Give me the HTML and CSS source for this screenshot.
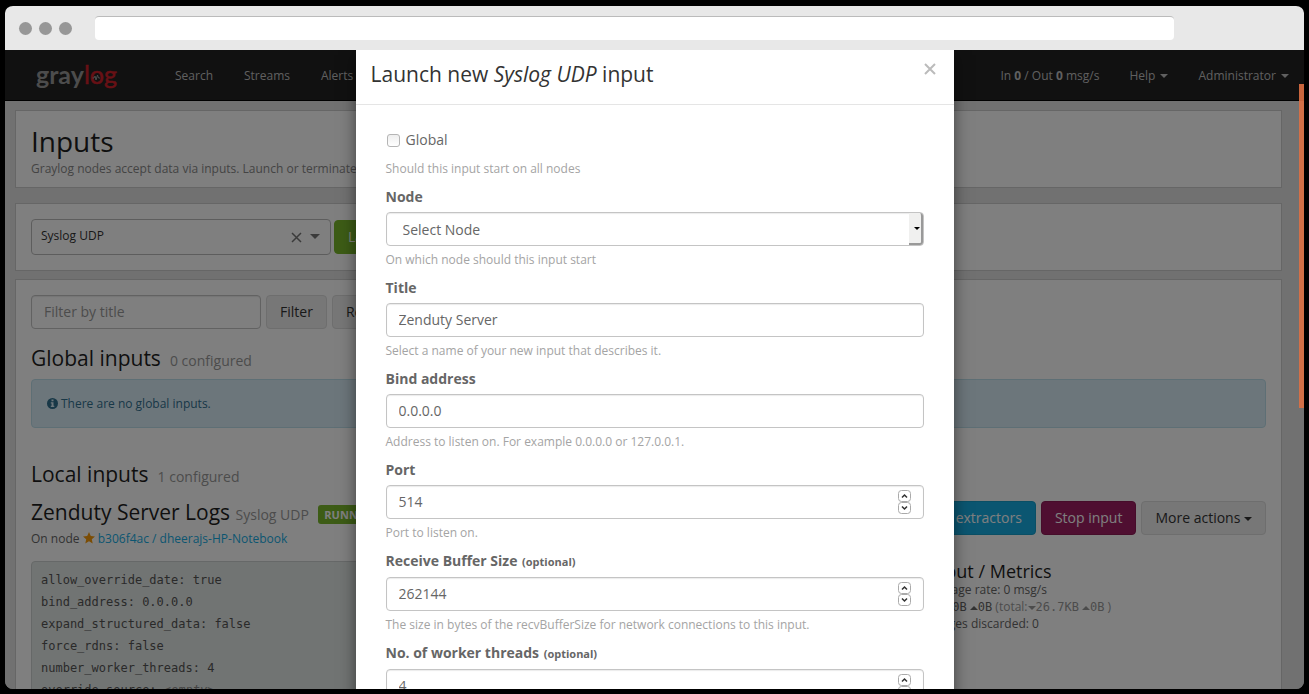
FILE: index.html
```html
<!DOCTYPE html>
<html lang="en">
<head>
<meta charset="utf-8">
<title>Graylog - Inputs</title>
<link rel="stylesheet" href="styles.css">
</head>
<body>
<div class="window">
  <div class="titlebar">
    <span class="dot"></span><span class="dot"></span><span class="dot"></span>
    <input class="address" type="text" aria-label="Address">
  </div>
  <div class="viewport">
    <header class="navbar">
      <a class="brand" href="#" aria-label="graylog">
        <svg width="84" height="32" viewBox="0 0 84 32">
          <text class="logo-text" x="1" y="25"><tspan class="logo-gray">gray</tspan><tspan class="logo-log">log</tspan></text>
          <path class="logo-pulse" d="M57.500 19h1.500l1-2 1 4 1.500-5 1 3h1.500"/>
        </svg>
      </a>
      <nav class="nav">
        <a href="#">Search</a>
        <a href="#">Streams</a>
        <a href="#">Alerts</a>
      </nav>
      <nav class="nav nav-right">
        <span>In <b>0</b> / Out <b>0</b> msg/s</span>
        <a href="#">Help <i class="caret"></i></a>
        <a href="#">Administrator <i class="caret"></i></a>
      </nav>
    </header>
    <main class="page">
      <section class="panel intro">
        <h1>Inputs</h1>
        <p class="muted">Graylog nodes accept data via inputs. Launch or terminate</p>
      </section>
      <section class="panel launcher">
        <div class="combo">
          <span>Syslog UDP</span>
          <svg width="32" height="14" viewBox="0 0 32 14"><path class="combo-x" d="M2 3l9 9M11 3l-9 9"/><path class="combo-arrow" d="M20 4h10l-5 5z"/></svg>
        </div>
        <button class="btn btn-green" type="button">Launch new input</button>
      </section>
      <section class="panel inputs">
        <form class="filter">
          <input class="control" type="text" placeholder="Filter by title" aria-label="Filter by title">
          <button class="btn" type="button">Filter</button>
          <button class="btn" type="button">Reset</button>
        </form>
        <h2>Global inputs <small>&nbsp;0 configured</small></h2>
        <div class="alert">
          <svg width="11" height="11" viewBox="0 0 11 11"><circle class="info-disc" cx="5.500" cy="5.500" r="5.500"/><path class="info-mark" d="M4.500 1.500h2v1.700h-2zM3.800 4.200h2.700v3.600h.8v1.200H3.800V7.800h.8V5.400h-.8z"/></svg>
          There are no global inputs.
        </div>
        <h2 class="local">Local inputs <small>&nbsp;1 configured</small></h2>
        <div class="input-head">
          <div>
            <h2>Zenduty Server Logs <small>Syslog UDP</small> <span class="badge">RUNNING</span></h2>
            <p class="node">On node <svg width="12" height="12" viewBox="0 0 12 12"><path class="star" d="M6 0l1.800 4 4.200.4-3.200 2.900.9 4.300L6 9.300l-3.700 2.300.9-4.300L0 4.400 4.200 4z"/></svg> <a href="#">b306f4ac / dheerajs-HP-Notebook</a></p>
          </div>
          <div class="actions">
            <button class="btn btn-blue" type="button">Manage extractors</button>
            <button class="btn btn-plum" type="button">Stop input</button>
            <button class="btn" type="button">More actions <i class="caret"></i></button>
          </div>
        </div>
        <div class="details">
          <ul class="config">
            <li>allow_override_date: true</li>
            <li>bind_address: 0.0.0.0</li>
            <li>expand_structured_data: false</li>
            <li>force_rdns: false</li>
            <li>number_worker_threads: 4</li>
            <li>override_source: <em>&lt;empty&gt;</em></li>
          </ul>
          <div class="metrics">
            <h3>Throughput / Metrics</h3>
            <p>1 minute average rate: 0 msg/s</p>
            <p>Network IO: <i class="caret"></i><code>0B</code> <i class="caret up"></i><code>0B</code> <span class="faint">(total:<i class="caret"></i><code>26.7KB</code> <i class="caret up"></i><code>0B</code> )</span></p>
            <p>Empty messages discarded: 0</p>
          </div>
        </div>
      </section>
    </main>
    <div class="backdrop">
      <div class="modal" role="dialog" aria-labelledby="modal-title">
        <div class="modal-head">
          <h2 id="modal-title">Launch new <em>Syslog UDP</em> input</h2>
          <button class="close" type="button" aria-label="Close"><svg width="12" height="12" viewBox="0 0 12 12"><path d="M1 1l10 10M11 1L1 11"/></svg></button>
        </div>
        <form class="modal-body">
          <div class="field">
            <label class="check"><input type="checkbox">Global</label>
            <p class="help">Should this input start on all nodes</p>
          </div>
          <div class="field">
            <label for="node">Node</label>
            <div class="select-wrap"><select class="control" id="node"><option>Select Node</option></select></div>
            <p class="help">On which node should this input start</p>
          </div>
          <div class="field">
            <label for="title">Title</label>
            <input class="control" id="title" type="text" value="Zenduty Server">
            <p class="help">Select a name of your new input that describes it.</p>
          </div>
          <div class="field">
            <label for="bind">Bind address</label>
            <input class="control" id="bind" type="text" value="0.0.0.0">
            <p class="help">Address to listen on. For example 0.0.0.0 or 127.0.0.1.</p>
          </div>
          <div class="field">
            <label for="port">Port</label>
            <div class="number-wrap">
              <input class="control" id="port" type="number" value="514">
              <svg class="spin" width="13" height="26" viewBox="0 0 13 26"><rect x=".5" y=".5" width="12" height="11" rx="3"/><rect x=".5" y="12.500" width="12" height="11" rx="3"/><path d="M4 7.500L6.500 5 9 7.500M4 16.500L6.500 19 9 16.500"/></svg>
            </div>
            <p class="help">Port to listen on.</p>
          </div>
          <div class="field">
            <label for="buffer">Receive Buffer Size <small>(optional)</small></label>
            <div class="number-wrap">
              <input class="control" id="buffer" type="number" value="262144">
              <svg class="spin" width="13" height="26" viewBox="0 0 13 26"><rect x=".5" y=".5" width="12" height="11" rx="3"/><rect x=".5" y="12.500" width="12" height="11" rx="3"/><path d="M4 7.500L6.500 5 9 7.500M4 16.500L6.500 19 9 16.500"/></svg>
            </div>
            <p class="help">The size in bytes of the recvBufferSize for network connections to this input.</p>
          </div>
          <div class="field">
            <label for="threads">No. of worker threads <small>(optional)</small></label>
            <div class="number-wrap">
              <input class="control" id="threads" type="number" value="4">
              <svg class="spin" width="13" height="26" viewBox="0 0 13 26"><rect x=".5" y=".5" width="12" height="11" rx="3"/><rect x=".5" y="12.500" width="12" height="11" rx="3"/><path d="M4 7.500L6.500 5 9 7.500M4 16.500L6.500 19 9 16.500"/></svg>
            </div>
          </div>
        </form>
      </div>
    </div>
    <div class="scrollbar"></div>
  </div>
</div>
</body>
</html>
```
FILE: styles.css
```css
* { box-sizing: border-box; }
body {
  margin: 0;
  background: #000;
  color: #666;
  font: 12px/17px "Open Sans", "Noto Sans", sans-serif;
}
h1, h2, h3, p, ul { margin: 0; padding: 0; font-weight: 400; }
button, input, select { font: inherit; color: inherit; }
a { text-decoration: none; }
svg { display: block; }

.window {
  display: flex;
  flex-direction: column;
  height: 100vh;
  border: solid #000;
  border-width: 6px 5px 5px;
  border-radius: 13px;
  overflow: hidden;
}

/* browser frame */
.titlebar {
  display: flex;
  flex: none;
  align-items: center;
  gap: 7px;
  height: 44px;
  padding: 0 130px 0 14px;
  background: #e8e8e8;
}
.dot { width: 13px; height: 13px; border-radius: 50%; background: #979797; }
.address {
  flex: 1;
  height: 24px;
  margin-left: 16px;
  border: 0;
  border-top: 1px solid #bbb;
  border-radius: 4px;
  background: #fff;
}
.viewport {
  position: relative;
  flex: 1;
  min-height: 0;
  overflow: hidden;
  background: #e3e3e3;
}

/* navigation */
.navbar {
  display: flex;
  align-items: center;
  height: 51px;
  padding: 0 15px 0 30px;
  border-bottom: 1px solid #000;
  background: #222;
}
.nav { display: flex; gap: 31px; margin-left: 56px; color: #c0c0c0; }
.nav a { color: inherit; }
.nav-right { gap: 30px; margin-left: auto; }
.logo-text { font: 700 25px Lato, sans-serif; }
.logo-gray { fill: #999; }
.logo-log { fill: #d0202a; stroke: #d0202a; stroke-width: .5; font-weight: 400; }
.logo-pulse { fill: none; stroke: #999; }
.caret {
  display: inline-block;
  margin-left: 2px;
  border: 4px solid transparent;
  border-top-color: currentColor;
  border-bottom: 0;
  vertical-align: middle;
}
.caret.up { border-top: 0; border-bottom: 4px solid currentColor; }

/* page */
.page { padding: 9px 22px 0 10px; }
.panel { padding: 15px; border: 1px solid #cdcdcd; background: #fff; }
.intro { margin-bottom: 15px; padding-bottom: 11px; }
.launcher { display: flex; align-items: center; gap: 3px; margin-bottom: 8px; }
h1 { color: #1f1f1f; font-size: 28px; line-height: 30px; }
h2 { color: #1f1f1f; font-size: 21px; line-height: 24px; white-space: nowrap; }
h3 { color: #1f1f1f; font-size: 18px; line-height: 20px; }
h2 small { color: #999; font-size: 14px; }
.muted { margin-top: 6px; color: #888; line-height: 14px; }

.combo {
  display: flex;
  justify-content: space-between;
  width: 300px;
  height: 36px;
  padding: 7px 8px 7px 9px;
  border: 1px solid #bbb;
  border-radius: 4px;
  color: #333;
}
.combo svg { margin-top: 3px; }
.combo-x { fill: none; stroke: #777; stroke-width: 1.500; }
.combo-arrow { fill: #777; }

.btn {
  height: 34px;
  padding: 0 13px 2px;
  border: 1px solid #dcdcdc;
  border-radius: 4px;
  background: #eee;
  color: #333;
  font-size: 14px;
  white-space: nowrap;
}
.btn .caret { margin-left: 0; }
.btn-green { border-color: #7bb92c; background: #7ab92c; color: #fff; }
.btn-blue { border-color: #159fca; background: #16ace3; color: #fff; }
.btn-plum { border-color: #8c1a55; background: #9e1f63; color: #fff; }

.control {
  display: block;
  width: 100%;
  height: 34px;
  padding: 0 12px 2px;
  border: 1px solid #c4c4c4;
  border-radius: 4px;
  background: #fff;
  box-shadow: inset 0 1px 1px rgba(0, 0, 0, .08);
  color: #666;
  font-size: 14px;
}
.control::placeholder { color: #999; }
.filter { display: flex; gap: 5px; margin-bottom: 17px; }
.filter .control { width: 230px; }
.alert {
  display: flex;
  align-items: center;
  gap: 3px;
  height: 49px;
  margin: 6px 0 34px;
  padding: 0 15px;
  border: 1px solid #bcdfeb;
  border-radius: 4px;
  background: #d9edf7;
  color: #31708f;
}
.info-disc { fill: #31708f; }
.info-mark { fill: #d9edf7; }
.local { margin-bottom: 12px; }

.input-head { display: flex; justify-content: space-between; height: 60px; }
.input-head h2 { line-height: 22px; }
.badge {
  display: inline-block;
  height: 19px;
  margin-left: 4px;
  padding: 0 6px;
  border-radius: 3px;
  background: #7ab92c;
  color: #fff;
  font-size: 11px;
  font-weight: 700;
  line-height: 19px;
  vertical-align: middle;
}
.node { margin-top: 4px; }
.node svg { display: inline-block; vertical-align: -1px; }
.node a { color: #16ace3; }
.star { fill: #f79a0a; }
.actions { display: flex; gap: 5px; }

.details { display: grid; grid-template-columns: 2fr 1fr; gap: 30px; }
.config {
  padding: 7px 9px;
  border: 1px solid #ccd0d0;
  border-radius: 4px;
  background: #e3e8e6;
  color: #555;
  font: 12px/22px "DejaVu Sans Mono", monospace;
  list-style: none;
}
.config em { color: #888; }
.metrics { padding-left: 10px; white-space: nowrap; }
.metrics code { font: 12px/16px "DejaVu Sans Mono", monospace; }
.metrics .caret { margin-left: 0; }
.faint { color: #999; }

/* dialog */
.backdrop {
  position: absolute;
  inset: 0;
  display: flex;
  justify-content: center;
  background: rgba(0, 0, 0, .5);
}
.modal {
  align-self: flex-start;
  width: 598px;
  background: #fff;
  box-shadow: 0 5px 15px rgba(0, 0, 0, .5);
}
.modal-head {
  display: flex;
  justify-content: space-between;
  align-items: flex-start;
  height: 55px;
  padding: 12px 15px;
  border-bottom: 1px solid #e5e5e5;
}
.modal-head h2 { color: #333; }
.close { margin: 0 3px; padding: 1px 0; border: 0; background: none; }
.close path { fill: none; stroke: #bbb; stroke-width: 2; }
.modal-body { padding: 25px 30px; }
.field { margin-bottom: 10px; }
.field label {
  display: block;
  margin-bottom: 5px;
  font-size: 14px;
  font-weight: 700;
  line-height: 20px;
}
.field label small { margin-left: 1px; font-size: 11px; }
.field .check { display: flex; align-items: center; gap: 6px; margin-bottom: 10px; font-weight: 400; }
.check input {
  appearance: none;
  width: 13px;
  height: 13px;
  margin: 1px 0 0 1px;
  border: 1px solid #b5b5b5;
  border-radius: 3px;
  background: linear-gradient(#eee, #fff);
}
.help { margin-top: 5px; color: #a4a4a4; }
.select-wrap, .number-wrap { position: relative; }
.select-wrap select { appearance: none; padding: 0 16px; }
.select-wrap::before {
  content: "";
  position: absolute;
  top: 1px;
  right: 1px;
  bottom: 1px;
  width: 12px;
  border: solid #999;
  border-width: 0 2px 2px 0;
  border-radius: 0 3px 3px 0;
  background: #f0f0ef;
}
.select-wrap::after {
  content: "";
  position: absolute;
  top: 15px;
  right: 4px;
  border: 3px solid transparent;
  border-top-color: #000;
  border-bottom: 0;
}
.number-wrap input { appearance: textfield; }
.spin { position: absolute; top: 5px; right: 13px; }
.spin rect { fill: #fff; stroke: #aaa; }
.spin path { fill: none; stroke: #333; stroke-width: 1.500; }

.scrollbar {
  position: absolute;
  top: 34px;
  right: 0;
  width: 5px;
  height: 324px;
  background: rgba(222, 112, 68, .9);
}
```
